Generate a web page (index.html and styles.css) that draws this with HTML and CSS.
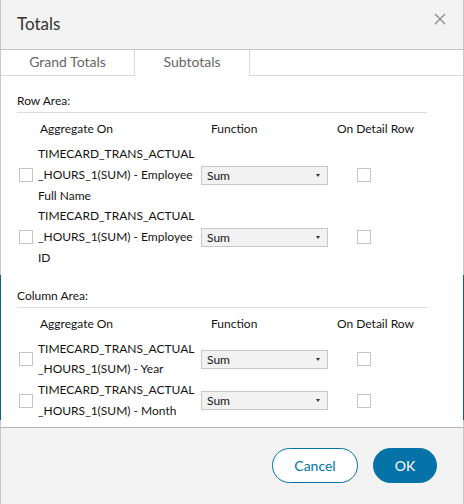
FILE: index.html
```html
<!DOCTYPE html>
<html>
<head>
<meta charset="utf-8">
<link rel="stylesheet" href="styles.css">
</head>
<body>
<div class="dialog">
  <div class="header">
    <div class="title">Totals</div>
    <div class="close">
      <svg width="12" height="12" viewBox="0 0 12 12"><path d="M1 1L11 11M11 1L1 11" stroke="#8c8c8c" stroke-width="1.4" fill="none"/></svg>
    </div>
  </div>
  <div class="tabs">
    <div class="tab">Grand Totals</div>
    <div class="tab active">Subtotals</div>
    <div class="tab-fill"></div>
  </div>
  <div class="body">
    <div class="section">
      <div class="section-title">Row Area:</div>
      <div class="cols">
        <div class="col-agg">Aggregate On</div>
        <div class="col-fn">Function</div>
        <div class="col-det">On Detail Row</div>
      </div>
      <div class="row">
        <span class="cb"></span>
        <div class="label">TIMECARD_TRANS_ACTUAL<wbr>_HOURS_1(SUM) - Employee Full Name</div>
        <div class="select"><span>Sum</span><span class="arrow"></span></div>
        <div class="det"><span class="cb"></span></div>
      </div>
      <div class="row">
        <span class="cb"></span>
        <div class="label">TIMECARD_TRANS_ACTUAL<wbr>_HOURS_1(SUM) - Employee ID</div>
        <div class="select"><span>Sum</span><span class="arrow"></span></div>
        <div class="det"><span class="cb"></span></div>
      </div>
    </div>
    <div class="section second">
      <div class="section-title">Column Area:</div>
      <div class="cols">
        <div class="col-agg">Aggregate On</div>
        <div class="col-fn">Function</div>
        <div class="col-det">On Detail Row</div>
      </div>
      <div class="row">
        <span class="cb"></span>
        <div class="label">TIMECARD_TRANS_ACTUAL<wbr>_HOURS_1(SUM) - Year</div>
        <div class="select"><span>Sum</span><span class="arrow"></span></div>
        <div class="det"><span class="cb"></span></div>
      </div>
      <div class="row">
        <span class="cb"></span>
        <div class="label">TIMECARD_TRANS_ACTUAL<wbr>_HOURS_1(SUM) - Month</div>
        <div class="select"><span>Sum</span><span class="arrow"></span></div>
        <div class="det"><span class="cb"></span></div>
      </div>
    </div>
  </div>
  <div class="footer">
    <button class="btn cancel">Cancel</button>
    <button class="btn ok">OK</button>
  </div>
</div>
</body>
</html>
```
FILE: styles.css
```css
html, body {
  margin: 0;
  padding: 0;
}
body {
  width: 464px;
  height: 504px;
  background: linear-gradient(to bottom, #c8c8c8 0, #c8c8c8 275px, #0a5f95 275px, #0a5f95 420px, #c8c8c8 420px);
  font-family: Lato, "Noto Sans", sans-serif;
  color: #141414;
  overflow: hidden;
}
.dialog {
  margin: 0 1px;
  width: 462px;
  height: 504px;
  background: #fff;
  display: flex;
  flex-direction: column;
}
.header {
  background: #f3f3f3;
  border-bottom: 1px solid #c4c4c4;
  display: flex;
  align-items: center;
  justify-content: space-between;
  padding: 0 16px 0 16px;
  box-sizing: border-box;
  height: 50px;
  flex: none;
}
.title {
  font-size: 17px;
  color: #333;
  margin-top: -3px;
}
.close {
  display: flex;
  margin-top: -11px;
  margin-right: 1px;
}
.tabs {
  display: flex;
  height: 26px;
  flex: none;
}
.tab {
  width: 133px;
  font-size: 14px;
  color: #666;
  text-align: center;
  line-height: 23px;
  border-bottom: 1px solid #d8d8d8;
  box-sizing: border-box;
  flex: none;
}
.tab.active {
  width: 116px;
  border-left: 1px solid #d8d8d8;
  border-right: 1px solid #d8d8d8;
  border-bottom: none;
}
.tab-fill {
  flex: 1;
  border-bottom: 1px solid #d8d8d8;
}
.body {
  flex: 1;
  padding: 0 36px 0 16px;
}
.section {
  padding-top: 17px;
}
.section.second {
  padding-top: 19px;
}
.section-title {
  font-size: 12px;
  line-height: 15px;
  padding-bottom: 4px;
  border-bottom: 1px solid #d7dde1;
}
.cols {
  display: flex;
  font-size: 12px;
  line-height: 15px;
  padding-top: 8px;
  padding-bottom: 8px;
}
.col-agg {
  width: 171px;
  padding-left: 23px;
  box-sizing: border-box;
  flex: none;
}
.col-fn {
  width: 126px;
  padding-left: 23px;
  flex: none;
}
.col-det {
  flex: none;
}
.row {
  display: flex;
  align-items: center;
}
.cb {
  display: inline-block;
  width: 12px;
  height: 12px;
  border: 1px solid #c4c4c4;
  background: #fff;
  flex: none;
}
.row > .cb {
  margin-left: 2px;
  margin-right: 5px;
}
.label {
  width: 163px;
  font-size: 12px;
  line-height: 20.75px;
  flex: none;
}
.select {
  width: 120px;
  height: 17px;
  border: 1px solid #c8c8c8;
  background: #f2f2f2;
  display: flex;
  align-items: center;
  justify-content: space-between;
  font-size: 12px;
  padding-left: 5px;
  flex: none;
}
.arrow {
  width: 0;
  height: 0;
  border-left: 2.5px solid transparent;
  border-right: 2.5px solid transparent;
  border-top: 3px solid #333;
  margin-right: 7px;
}
.det {
  display: flex;
  padding-left: 29px;
  flex: none;
}
.footer {
  height: 77px;
  background: #f3f3f3;
  border-top: 1px solid #b8b8b8;
  box-sizing: border-box;
  display: flex;
  justify-content: flex-end;
  align-items: flex-start;
  padding: 20px 26px 0 0;
  gap: 15px;
  flex: none;
}
.btn {
  font-family: Lato, "Noto Sans", sans-serif;
  font-size: 14px;
  height: 35px;
  border-radius: 18px;
  cursor: pointer;
}
.cancel {
  width: 86px;
  background: #fff;
  border: 1px solid #0572a8;
  color: #0572a8;
}
.ok {
  width: 64px;
  background: #0572a8;
  border: 1px solid #0572a8;
  color: #fff;
}
```
